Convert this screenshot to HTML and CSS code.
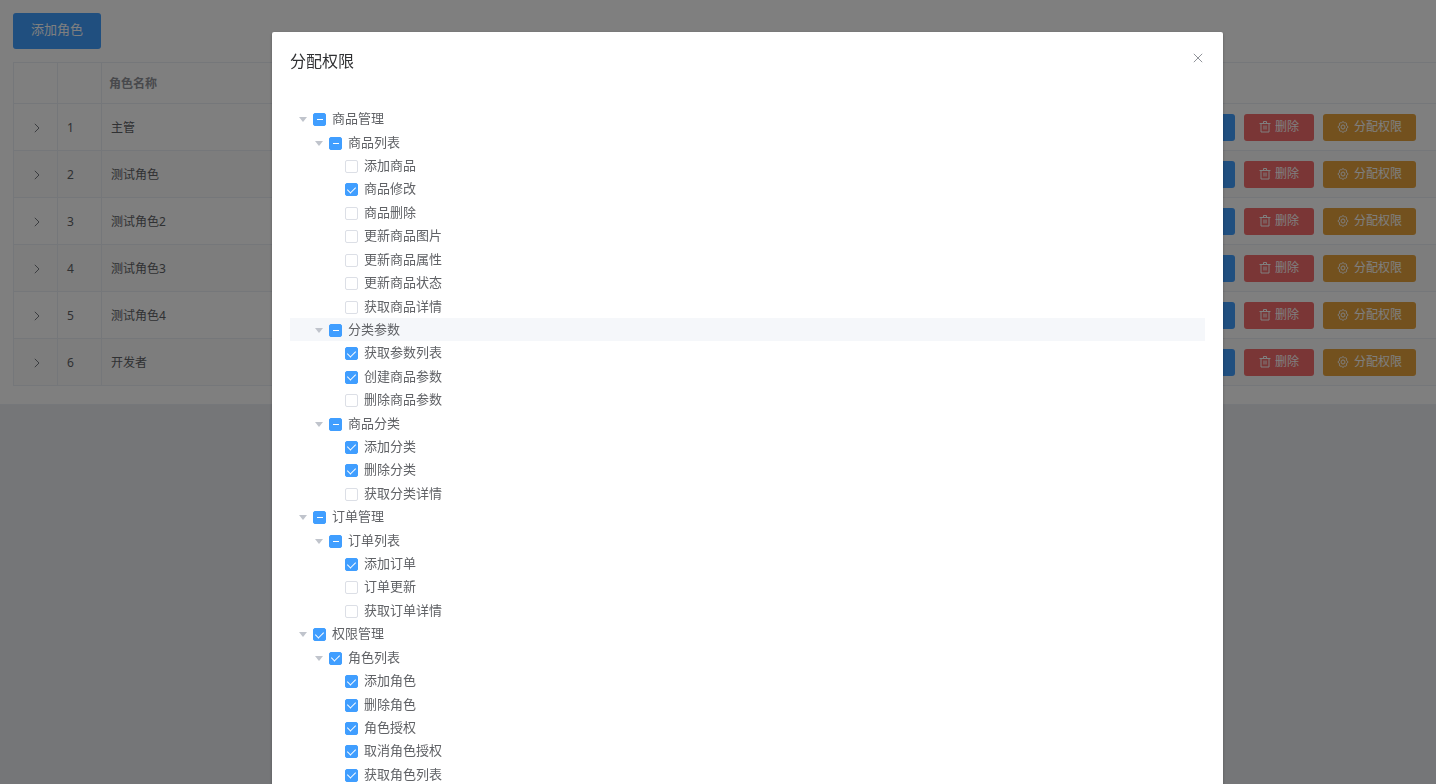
FILE: index.html
```html
<!DOCTYPE html>
<html lang="zh-CN">
<head>
<meta charset="utf-8">
<meta name="viewport" content="width=device-width, initial-scale=1">
<title>分配权限</title>
<link rel="stylesheet" href="styles.css">
</head>
<body>
<svg class="sprite" aria-hidden="true">
  <symbol id="trash" viewBox="0 0 12 12"><path d="M.5 2.5h11M4.5 2.5v-2h3v2M2 2.5v8.5h8v-8.500M5 4.5v4M7 4.5v4"/></symbol>
  <symbol id="gear" viewBox="0 0 12 12"><path d="M4.4 1.8Q6-.6 7.6 1.8Q10.6 1.6 9.3 4.3Q12.6 6 9.3 7.7Q10.6 10.4 7.6 10.2Q6 12.6 4.400 10.2Q1.4 10.4 2.7 7.7Q-.6 6 2.7 4.3Q1.4 1.6 4.4 1.8Z"/><path d="M5 4.1h2L8.1 6 7 7.9H5L3.9 6Z"/></symbol>
  <symbol id="arrow" viewBox="0 0 6 10"><path d="M.8.8 5 5 .8 9.2"/></symbol>
  <symbol id="cross" viewBox="0 0 10 10"><path d="m.8.8 8.4 8.4M9.2.8.8 9.2"/></symbol>
</svg>

<main class="card">
  <button class="btn btn-add" type="button">添加角色</button>
  <table class="roles">
    <colgroup><col class="col-small"><col class="col-small"><col><col class="col-actions"></colgroup>
    <thead>
      <tr><th></th><th></th><th class="head-name">角色名称</th><th></th></tr>
    </thead>
    <tbody>
      <tr>
        <td class="expand"><button class="toggle" type="button" aria-label="展开"><svg><use href="#arrow"/></svg></button></td><td>1</td><td>主管</td>
        <td><div class="actions"><button class="btn btn-edit" type="button" aria-label="编辑"></button><button class="btn btn-delete" type="button"><svg class="icon"><use href="#trash"/></svg>删除</button><button class="btn btn-assign" type="button"><svg class="icon"><use href="#gear"/></svg>分配权限</button></div></td>
      </tr>
      <tr>
        <td class="expand"><button class="toggle" type="button" aria-label="展开"><svg><use href="#arrow"/></svg></button></td><td>2</td><td>测试角色</td>
        <td><div class="actions"><button class="btn btn-edit" type="button" aria-label="编辑"></button><button class="btn btn-delete" type="button"><svg class="icon"><use href="#trash"/></svg>删除</button><button class="btn btn-assign" type="button"><svg class="icon"><use href="#gear"/></svg>分配权限</button></div></td>
      </tr>
      <tr>
        <td class="expand"><button class="toggle" type="button" aria-label="展开"><svg><use href="#arrow"/></svg></button></td><td>3</td><td>测试角色2</td>
        <td><div class="actions"><button class="btn btn-edit" type="button" aria-label="编辑"></button><button class="btn btn-delete" type="button"><svg class="icon"><use href="#trash"/></svg>删除</button><button class="btn btn-assign" type="button"><svg class="icon"><use href="#gear"/></svg>分配权限</button></div></td>
      </tr>
      <tr>
        <td class="expand"><button class="toggle" type="button" aria-label="展开"><svg><use href="#arrow"/></svg></button></td><td>4</td><td>测试角色3</td>
        <td><div class="actions"><button class="btn btn-edit" type="button" aria-label="编辑"></button><button class="btn btn-delete" type="button"><svg class="icon"><use href="#trash"/></svg>删除</button><button class="btn btn-assign" type="button"><svg class="icon"><use href="#gear"/></svg>分配权限</button></div></td>
      </tr>
      <tr>
        <td class="expand"><button class="toggle" type="button" aria-label="展开"><svg><use href="#arrow"/></svg></button></td><td>5</td><td>测试角色4</td>
        <td><div class="actions"><button class="btn btn-edit" type="button" aria-label="编辑"></button><button class="btn btn-delete" type="button"><svg class="icon"><use href="#trash"/></svg>删除</button><button class="btn btn-assign" type="button"><svg class="icon"><use href="#gear"/></svg>分配权限</button></div></td>
      </tr>
      <tr>
        <td class="expand"><button class="toggle" type="button" aria-label="展开"><svg><use href="#arrow"/></svg></button></td><td>6</td><td>开发者</td>
        <td><div class="actions"><button class="btn btn-edit" type="button" aria-label="编辑"></button><button class="btn btn-delete" type="button"><svg class="icon"><use href="#trash"/></svg>删除</button><button class="btn btn-assign" type="button"><svg class="icon"><use href="#gear"/></svg>分配权限</button></div></td>
      </tr>
    </tbody>
  </table>
</main>

<div class="overlay">
  <section class="dialog" role="dialog" aria-modal="true" aria-labelledby="dialog-title">
    <header class="dialog-head">
      <h1 class="dialog-title" id="dialog-title">分配权限</h1>
      <button class="close" type="button" aria-label="关闭"><svg><use href="#cross"/></svg></button>
    </header>
    <ul class="tree">
      <li class="node l1"><span class="caret"></span><label><input class="check mixed" type="checkbox">商品管理</label></li>
      <li class="node l2"><span class="caret"></span><label><input class="check mixed" type="checkbox">商品列表</label></li>
      <li class="node l3"><label><input class="check" type="checkbox">添加商品</label></li>
      <li class="node l3"><label><input class="check" type="checkbox" checked>商品修改</label></li>
      <li class="node l3"><label><input class="check" type="checkbox">商品删除</label></li>
      <li class="node l3"><label><input class="check" type="checkbox">更新商品图片</label></li>
      <li class="node l3"><label><input class="check" type="checkbox">更新商品属性</label></li>
      <li class="node l3"><label><input class="check" type="checkbox">更新商品状态</label></li>
      <li class="node l3"><label><input class="check" type="checkbox">获取商品详情</label></li>
      <li class="node l2 active"><span class="caret"></span><label><input class="check mixed" type="checkbox">分类参数</label></li>
      <li class="node l3"><label><input class="check" type="checkbox" checked>获取参数列表</label></li>
      <li class="node l3"><label><input class="check" type="checkbox" checked>创建商品参数</label></li>
      <li class="node l3"><label><input class="check" type="checkbox">删除商品参数</label></li>
      <li class="node l2"><span class="caret"></span><label><input class="check mixed" type="checkbox">商品分类</label></li>
      <li class="node l3"><label><input class="check" type="checkbox" checked>添加分类</label></li>
      <li class="node l3"><label><input class="check" type="checkbox" checked>删除分类</label></li>
      <li class="node l3"><label><input class="check" type="checkbox">获取分类详情</label></li>
      <li class="node l1"><span class="caret"></span><label><input class="check mixed" type="checkbox">订单管理</label></li>
      <li class="node l2"><span class="caret"></span><label><input class="check mixed" type="checkbox">订单列表</label></li>
      <li class="node l3"><label><input class="check" type="checkbox" checked>添加订单</label></li>
      <li class="node l3"><label><input class="check" type="checkbox">订单更新</label></li>
      <li class="node l3"><label><input class="check" type="checkbox">获取订单详情</label></li>
      <li class="node l1"><span class="caret"></span><label><input class="check" type="checkbox" checked>权限管理</label></li>
      <li class="node l2"><span class="caret"></span><label><input class="check" type="checkbox" checked>角色列表</label></li>
      <li class="node l3"><label><input class="check" type="checkbox" checked>添加角色</label></li>
      <li class="node l3"><label><input class="check" type="checkbox" checked>删除角色</label></li>
      <li class="node l3"><label><input class="check" type="checkbox" checked>角色授权</label></li>
      <li class="node l3"><label><input class="check" type="checkbox" checked>取消角色授权</label></li>
      <li class="node l3"><label><input class="check" type="checkbox" checked>获取角色列表</label></li>
    </ul>
  </section>
</div>
</body>
</html>
```

FILE: styles.css
```css
* { box-sizing: border-box; }

body {
  margin: 0;
  overflow: hidden;
  background: #eaedf1;
  color: #606266;
  font: 12px/16px "Noto Sans", "Noto Sans CJK SC", sans-serif;
}

.sprite { position: absolute; width: 0; height: 0; }

svg {
  display: block;
  fill: none;
  stroke: currentColor;
}

button { font: inherit; cursor: pointer; }

.card {
  padding: 13px 0 18px 13px;
  background: #fff;
  border-bottom: 1px solid #ebeef5;
  box-shadow: 0 1px 1px rgba(0, 0, 0, .35);
}

.btn {
  display: inline-flex;
  align-items: center;
  justify-content: center;
  gap: 5px;
  height: 27px;
  padding: 0 14px;
  border: 0;
  border-radius: 3px;
  color: #fff;
  white-space: nowrap;
}

.btn-add {
  display: flex;
  height: 36px;
  margin-bottom: 13px;
  padding: 0 18px 4px;
  background: #409eff;
  font-size: 13px;
}

.btn-edit { width: 70px; background: #409eff; }
.btn-delete { gap: 4px; padding: 0 15px; background: #f56c6c; }
.btn-assign { background: #e6a23c; }
.icon { width: 12px; height: 12px; }

.roles {
  width: 100%;
  table-layout: fixed;
  border-collapse: separate;
  border-spacing: 0;
  border-top: 1px solid #ebeef5;
  border-left: 1px solid #ebeef5;
}

.col-small { width: 44px; }
.col-actions { width: 300px; }

.roles th,
.roles td {
  padding: 2px 9px 0;
  border-right: 1px solid #ebeef5;
  border-bottom: 1px solid #ebeef5;
  text-align: left;
}

.roles th { height: 41px; color: #909399; }
.roles td { height: 47px; }
.roles th:last-child,
.roles td:last-child { border-right: 0; }
.roles .head-name { padding-left: 7px; }
.roles tbody tr:nth-child(even) { background: #fafafa; }
.roles td:last-child { padding: 0 20px 0 0; }
.roles .expand { padding-left: 11px; }

.toggle {
  display: block;
  margin: 0 auto;
  padding: 0;
  border: 0;
  background: none;
  color: #777a80;
}

.toggle svg { width: 6px; height: 10px; }

.actions {
  display: flex;
  justify-content: flex-end;
  gap: 9px;
}

.overlay {
  position: fixed;
  inset: 0;
  overflow: hidden;
  padding: 32px 213px 0 272px;
  background: rgba(0, 0, 0, .5);
}

.dialog {
  min-height: 100%;
  padding: 18px;
  border-radius: 2px;
  background: #fff;
  box-shadow: 0 1px 3px rgba(0, 0, 0, .3);
}

.dialog-head {
  display: flex;
  align-items: flex-start;
  justify-content: space-between;
  margin-bottom: 34px;
}

.dialog-title {
  margin: 0;
  color: #303133;
  font-size: 16px;
  font-weight: 400;
  line-height: 23px;
}

.close {
  padding: 3px 2px;
  border: 0;
  background: none;
  color: #909399;
}

.close svg { width: 10px; height: 10px; }

.tree {
  display: grid;
  grid-auto-rows: 1fr;
  height: 679px;
  margin: 0;
  padding: 0;
  list-style: none;
  font-size: 13px;
}

.node { display: flex; align-items: center; }
.node.active { background: #f5f7fa; }
.l1 { padding-left: 9px; }
.l2 { padding-left: 25px; }
.l3 { padding-left: 55px; }

.caret {
  width: 8px;
  margin: 2px 6px 0 0;
  border: 4px solid transparent;
  border-top: 5px solid #c0c4cc;
  border-bottom: 0;
}

.node label {
  display: flex;
  align-items: center;
  gap: 6px;
  padding-bottom: 1px;
  line-height: 20px;
}

.check {
  display: grid;
  place-items: center;
  width: 13px;
  height: 13px;
  margin: 3px 0 0;
  appearance: none;
  border: 1px solid #dcdfe6;
  border-radius: 2px;
  background: #fff;
}

.check:checked,
.check.mixed {
  border-color: #409eff;
  background: #409eff;
}

.check:checked::after {
  content: "";
  width: 4px;
  height: 7px;
  margin-bottom: 2px;
  border: solid #fff;
  border-width: 0 1px 1px 0;
  transform: rotate(45deg);
}

.check.mixed::after {
  content: "";
  width: 6px;
  height: 1px;
  background: #fff;
}
```
